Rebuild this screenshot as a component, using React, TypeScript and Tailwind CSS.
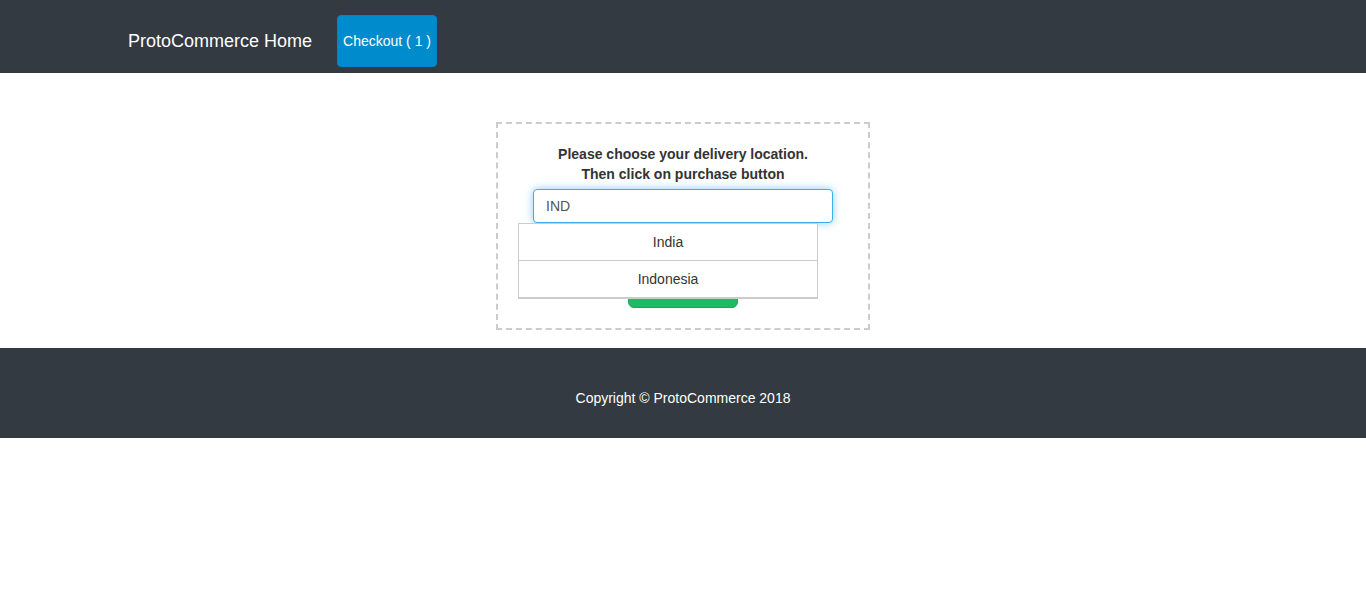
import { useState } from "react";

const countries = ["India", "Indonesia"];

function Navbar() {
  return (
    <nav className="bg-[#333a41] pt-[15px] pb-1.5">
      <div className="mx-auto flex max-w-[1140px] items-center gap-[25px] px-[15px]">
        <a href="#home" className="text-lg text-white">
          ProtoCommerce Home
        </a>
        <a
          href="#checkout"
          className="flex h-[52px] items-center rounded border border-[#0085c3] bg-[#008ccc] px-[5px] text-sm text-white"
        >
          Checkout ( 1 )
        </a>
      </div>
    </nav>
  );
}

function DeliveryForm() {
  const [country, setCountry] = useState("IND");
  return (
    <form className="mx-auto w-full max-w-[374px] border-2 border-dashed border-[#ccc] p-5 text-center">
      <label htmlFor="country" className="block text-sm font-bold">
        Please choose your delivery location.
        <br />
        Then click on purchase button
      </label>
      <div className="relative mt-[5px]">
        <input
          id="country"
          type="text"
          autoComplete="off"
          value={country}
          onChange={(e) => setCountry(e.target.value)}
          className="mx-auto block h-[34px] w-[300px] rounded border border-[#3bafe9] bg-white px-3 text-sm text-[#555] shadow-[0_0_8px_rgba(59,175,233,0.6)] outline-none"
        />
        <ul className="absolute top-full left-0 w-[300px] border border-[#ccc] bg-white text-sm">
          {countries.map((name) => (
            <li key={name} className="border-b border-[#ccc]">
              <a href={`#${name}`} className="block py-2">
                {name}
              </a>
            </li>
          ))}
        </ul>
      </div>
      <button
        type="button"
        aria-label="Purchase"
        className="mt-12 h-[37px] w-[110px] rounded-md border border-[#18a957] bg-[#1dbb63] align-top"
      />
    </form>
  );
}

export default function App() {
  return (
    <div className="bg-white font-['Liberation_Sans',Arial,sans-serif] leading-5 text-[#333]">
      <Navbar />
      <main className="pt-[49px] pb-[18px]">
        <DeliveryForm />
      </main>
      <footer className="bg-[#333a41] px-4 pt-10 pb-[30px]">
        <p className="text-center text-sm text-white">Copyright © ProtoCommerce 2018</p>
      </footer>
    </div>
  );
}
